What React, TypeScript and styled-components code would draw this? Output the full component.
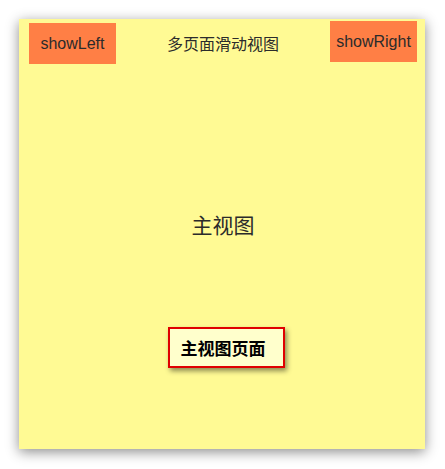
import { createGlobalStyle, styled } from "styled-components";

const GlobalStyle = createGlobalStyle`
  html, body {
    margin: 0;
    padding: 0;
    background: #ffffff;
    font-family: "Liberation Sans", "Noto Sans CJK SC", sans-serif;
  }
`;

const Page = styled.div`
  width: 445px;
  height: 469px;
  padding: 19px 20px 20px 19px;
  box-sizing: border-box;
`;

const Window = styled.div`
  width: 406px;
  height: 430px;
  background: #fffa94;
  box-shadow: 0 3px 12px rgba(0, 0, 0, 0.45);
  display: flex;
  flex-direction: column;
  align-items: center;
`;

const Header = styled.div`
  width: 100%;
  display: flex;
  align-items: flex-start;
  justify-content: space-between;
  padding: 2px 8px 0 10px;
  box-sizing: border-box;
`;

const SideButton = styled.div<{ $top: number }>`
  margin-top: ${(p) => p.$top}px;
  width: 87px;
  height: 41px;
  background: #ff7f45;
  color: #2b2b2b;
  font-size: 16px;
  display: flex;
  align-items: center;
  justify-content: center;
`;

const Title = styled.div`
  margin-top: 10px;
  font-size: 16px;
  color: #2b2b2b;
`;

const MainLabel = styled.div`
  margin-top: 145px;
  margin-left: 2px;
  font-size: 21px;
  color: #2b2b2b;
`;

const PageCard = styled.div`
  margin-top: 88px;
  margin-left: 8px;
  width: 117px;
  height: 41px;
  box-sizing: border-box;
  border: 2px solid #e00000;
  background: #ffffcc;
  box-shadow: 2px 3px 5px rgba(0, 0, 0, 0.45);
  font-family: "Noto Sans CJK SC", sans-serif;
  font-weight: 700;
  font-size: 17px;
  color: #000;
  display: flex;
  align-items: center;
  padding-left: 11px;
`;

export default function App() {
  return (
    <>
      <GlobalStyle />
      <Page>
        <Window>
          <Header>
            <SideButton $top={2}>showLeft</SideButton>
            <Title>多页面滑动视图</Title>
            <SideButton $top={0}>showRight</SideButton>
          </Header>
          <MainLabel>主视图</MainLabel>
          <PageCard>主视图页面</PageCard>
        </Window>
      </Page>
    </>
  );
}
